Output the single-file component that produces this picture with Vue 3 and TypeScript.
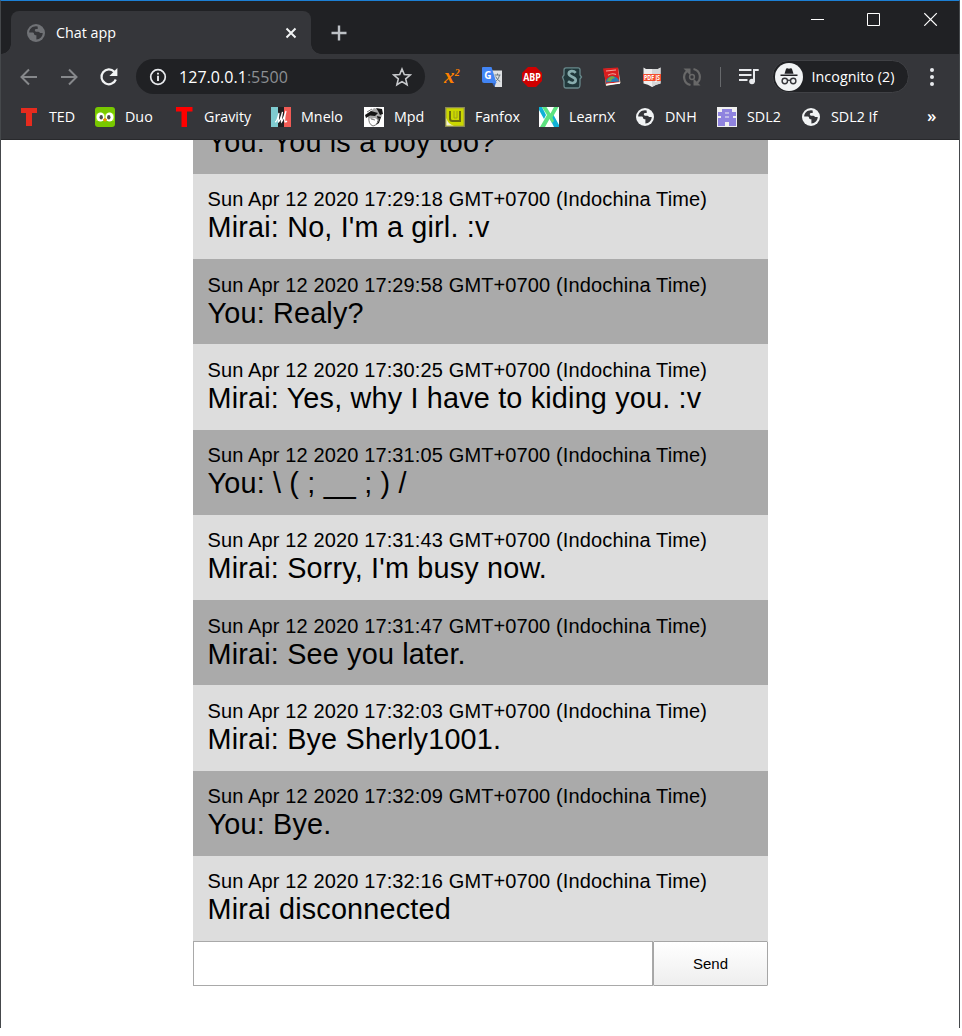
<script setup lang="ts">
interface Message { time?: string; text: string }
const messages: Message[] = [
  { text: 'You: You is a boy too?' },
  { time: '17:29:18', text: "Mirai: No, I'm a girl. :v" },
  { time: '17:29:58', text: 'You: Realy?' },
  { time: '17:30:25', text: 'Mirai: Yes, why I have to kiding you. :v' },
  { time: '17:31:05', text: 'You: \\ ( ; __ ; ) /' },
  { time: '17:31:43', text: "Mirai: Sorry, I'm busy now." },
  { time: '17:31:47', text: 'Mirai: See you later.' },
  { time: '17:32:03', text: 'Mirai: Bye Sherly1001.' },
  { time: '17:32:09', text: 'You: Bye.' },
  { time: '17:32:16', text: 'Mirai disconnected' },
]
const bookmarks: string[] = ['TED', 'Duo', 'Gravity', 'Mnelo', 'Mpd', 'Fanfox', 'LearnX', 'DNH', 'SDL2', 'SDL2 If']
</script>

<template>
  <div class="window">
    <header class="titlebar">
      <div class="tab">
        <svg class="favicon" viewBox="0 0 20 20"><circle cx="10" cy="10" r="9" fill="#707276" /><path d="M10 3.2C6 3.2 3.2 6.2 3.2 9.5h3.2c1.2 0 1.7.7 1.7 1.5s.5 1.2 1.4 1.2h.9v4.4c3.6-.1 6.3-2.9 6.3-6.5h-1.9c-.8 0-1.2-.7-1.8-1.1-.7-.5-1.7-.3-2.4-.3-1.1 0-1.8-.7-1.8-1.5s.8-1.3 1.8-1.3h1.1V3.4z" fill="#35363a" /></svg>
        <span class="tab-title">Chat app</span>
        <svg class="close" viewBox="0 0 12 12"><path d="M1.5 1.5l9 9M10.5 1.5l-9 9" stroke="#f1f3f4" stroke-width="2" /></svg>
      </div>
      <svg class="plus" viewBox="0 0 16 16"><path d="M8 .5v15M.5 8h15" stroke="#bdc1c6" stroke-width="2.4" /></svg>
      <div class="controls">
        <svg viewBox="0 0 14 14"><path d="M1 7.5h13" stroke="#fff" /></svg>
        <svg viewBox="0 0 14 14"><path d="M.5 1.5h12v12H.5z" fill="none" stroke="#fff" /></svg>
        <svg viewBox="0 0 14 14"><path d="M.3 1.200l12.500 12.500M12.800 1.200L.3 13.700" stroke="#fff" stroke-width="1.200" /></svg>
      </div>
    </header>

    <nav class="toolbar">
      <div class="nav-icons">
        <svg viewBox="0 0 20 20"><path d="M18 10H3M10 2.500L2.500 10l7.500 7.500" fill="none" stroke="#86888b" stroke-width="2" /></svg>
        <svg viewBox="0 0 20 20"><path d="M2 10h15M10 2.500l7.500 7.500-7.500 7.500" fill="none" stroke="#86888b" stroke-width="2" /></svg>
        <svg viewBox="0 0 20 20"><path d="M16.800 12.500A7.400 7.400 0 1 1 15.300 4.800" fill="none" stroke="#f1f3f4" stroke-width="2.200" /><path d="M18.400 1v8h-8z" fill="#f1f3f4" /></svg>
      </div>
      <div class="omnibox">
        <svg class="info" viewBox="0 0 18 18"><circle cx="9" cy="9" r="7.300" fill="none" stroke="#e8eaed" stroke-width="1.700" /><path d="M9 7.700V13M9 4.800v1.700" stroke="#e8eaed" stroke-width="1.900" /></svg>
        <span class="url">127.0.0.1<span class="port">:5500</span></span>
        <svg class="star" viewBox="0 0 20 20"><path d="M10 2l2.300 5.500 5.900.5-4.500 3.900 1.400 5.800L10 14.600l-5.100 3.100 1.400-5.800L1.800 8l5.900-.5z" fill="none" stroke="#c8cacd" stroke-width="1.600" /></svg>
      </div>
      <div class="extensions">
        <svg viewBox="0 0 20 20"><text x="2" y="16" font-family="Liberation Serif, serif" font-size="21" font-weight="bold" font-style="italic" fill="#ff8000">x</text><text x="12.800" y="9" font-family="Liberation Serif, serif" font-size="10" font-weight="bold" font-style="italic" fill="#ff8000">2</text></svg>
        <svg viewBox="0 0 20 20"><path d="M8 3.500h12V20h-7z" fill="#dfe1e3" /><path d="M10 15.500h4L12.500 20z" fill="#3367c7" /><path d="M12.500 8h6M15.500 6.500V8M17.500 8c-.5 3-2 5-4 6.500M13.700 9.500c1 2 2.500 4 4.500 5" fill="none" stroke="#667680" /><path d="M1 0h8.500l5 16H2Q0 16 0 14V1q0-1 1-1" fill="#4285f4" /><text x="2.200" y="11.700" font-family="Open Sans, sans-serif" font-size="10" font-weight="bold" fill="#fff">G</text></svg>
        <svg viewBox="0 0 20 20"><path d="M6 0h8l6 6v8l-6 6H6l-6-6V6z" fill="#d00000" /><text x="1.200" y="13.800" textLength="17.600" lengthAdjust="spacingAndGlyphs" font-family="Open Sans, sans-serif" font-size="10.500" font-weight="bold" fill="#fff">ABP</text></svg>
        <svg viewBox="0 0 20 20"><path d="M4 .8h12q2 0 2 2V8l1.500 2-1.500 2v5q0 4-2 4H4q-2 0-2-2v-5L.5 10 2 8V3Q2 .8 4 .8z" fill="#20383b" stroke="#69898c" stroke-width="1.300" /><path d="M13.700 5.800C11.500 3.300 6.800 3.700 6.800 6.800S13.700 9.500 13.700 13.100 8.800 16.800 6 14.300" fill="none" stroke="#88adae" stroke-width="2.700" /></svg>
        <svg viewBox="0 0 20 20"><path d="M2 2l14-1 2.500 15L4 19z" fill="#e6d6bf" /><path d="M1 1.500L16 .5l1.500 14.700L4 17z" fill="#d91d1d" /><path d="M4 15.500c-.5-7 11-9 13.300-1z" fill="#267cb3" /><path d="M5 14c2-5 6-6 8-3l-3 1-1 2.500z" fill="#79a545" /><path d="M4 4l10-1M6 8.200q4-2.500 8-.7" fill="none" stroke="#f4a49b" stroke-width="1.100" /><path d="M4.500 17.500L18 16" stroke="#fff" stroke-width="1.500" /></svg>
        <svg viewBox="0 0 20 20"><path d="M1.500.5L4 2h12l2.500-1.500v16Q14 17 10 20q-4-3-8.500-3.500z" fill="#eee" /><path d="M10 2h6l2.500-1.500v16Q14 17 10 20z" fill="#d5d6d7" /><path d="M1 7h18v7H1z" fill="#f34e2d" /><text x="2" y="12.800" textLength="16" lengthAdjust="spacingAndGlyphs" font-family="Open Sans, sans-serif" font-size="6.500" font-weight="bold" fill="#fff">PDF JS</text></svg>
        <svg viewBox="0 0 20 20" fill="none" stroke="#686868" stroke-width="2.200"><path d="M8.500 18A8 8 0 0 1 5.300 3.800M11.500 2A8 8 0 0 1 14.700 16.200" /><path d="M1.500 1.500H8.500V8.500z" fill="#686868" stroke="none" /><path d="M18.500 18.500H11.500V11.500z" fill="#686868" stroke="none" /><circle cx="10" cy="10" r="2.400" stroke-width="1.500" /></svg>
      </div>
      <span class="divider"></span>
      <svg class="queue" viewBox="0 0 20 18"><path d="M0 2h12.500M0 7h12.500M0 12h8.500" stroke="#e8eaed" stroke-width="2" /><circle cx="13" cy="13.500" r="2.800" fill="#e8eaed" /><path d="M15 14V2h4.700" fill="none" stroke="#e8eaed" stroke-width="2" /></svg>
      <div class="profile">
        <svg viewBox="0 0 28 28"><circle cx="14" cy="14" r="14" fill="#f1f3f4" /><path d="M9.500 10.800L11 6q.4-1 1.300-.7l1.700.5 1.700-.5q.9-.3 1.300.7l1.500 4.800zM5.500 11.500h17v1.400h-17z" fill="#202124" /><circle cx="9.800" cy="18" r="2.700" fill="none" stroke="#35363a" stroke-width="1.400" /><circle cx="18.200" cy="18" r="2.700" fill="none" stroke="#35363a" stroke-width="1.400" /><path d="M12.400 17.700q1.600-1 3.200 0" fill="none" stroke="#35363a" stroke-width="1.300" /></svg>
        <span>Incognito (2)</span>
      </div>
      <svg class="menu" viewBox="0 0 4 18"><circle cx="2" cy="2" r="2" /><circle cx="2" cy="9" r="2" /><circle cx="2" cy="16" r="2" /></svg>
    </nav>

    <div class="bookmarks">
      <span v-for="(name, i) in bookmarks" :key="name" class="bookmark">
        <svg viewBox="0 0 20 20">
          <path v-if="i === 0" d="M2 1h16v5h-5v13H7V6H2z" fill="#e62b1e" />
          <g v-else-if="i === 1"><rect width="20" height="20" rx="3" fill="#78c800" /><path d="M1 7q4-3 9 0 5-3 9 0v7H1z" fill="#a0e719" /><ellipse cx="5.500" cy="10" rx="4" ry="4.500" fill="#fff" /><ellipse cx="14.500" cy="10" rx="4" ry="4.500" fill="#fff" /><ellipse cx="6.200" cy="10.200" rx="1.700" ry="2.300" fill="#4b4b4b" /><ellipse cx="13.800" cy="10.200" rx="1.700" ry="2.300" fill="#4b4b4b" /><path d="M7.800 12.500L10 11l2.200 1.500L10 15z" fill="#f49000" /></g>
          <path v-else-if="i === 2" d="M2 0h16.500v4.500H13V20H7.500V4.500H2z" fill="#f00" />
          <g v-else-if="i === 3"><path d="M0 0h7v20H0z" fill="#7fcbd0" /><path d="M7 0h6v20H7z" fill="#211f20" /><path d="M13 0h7v20h-7z" fill="#f15b55" /><path d="M4 15q2 0 4-9-1 8-.5 9 2-2 4-10-1.500 8-1 10 2-3 4.500-11-2 8-1 11 1 0 2-1" fill="none" stroke="#fff" stroke-width="1.200" /></g>
          <g v-else-if="i === 4"><path d="M0 0h20v20H0z" fill="#fff" /><path d="M10 1l6 2 2 6-3 5-4-3-4 1-4-3 4-5z" fill="#a8a8a8" /><path d="M1 8l6-4 7 2-3 3-5-.5L2 11zM12 1l6 1 1 5-3 1-2-4zM13 9l4 1-2 6-3 2 2-5z" fill="#151515" /><path d="M5 10q-1 7 4 9 5-1 6-8M7 12l4 1M3 5l5-3" fill="none" stroke="#777" /></g>
          <g v-else-if="i === 5"><path d="M.7.700h18.600v18.600H.7z" fill="#cbd700" stroke="#8b8954" stroke-width="1.300" /><path d="M5 4v7.500q0 2.500 2.500 2.500H15V4" fill="none" stroke="#68690d" stroke-width="2" /><path d="M9 4v7h3V4" fill="none" stroke="#9da018" stroke-width="1" /><path d="M1.400 11q1.600 6.600 7.600 7.600H1.400z" fill="#f3f1d9" /></g>
          <g v-else-if="i === 6"><path d="M0 0h20v20H0z" fill="#fff" /><path d="M0 0h3l4 8-2 4L0 3zM11 12l3-5 6 11v2h-5z" fill="#10b1d6" /><path d="M3 0h4.500l4 6.500L15 0h4.500l-6 10.500L15 14l-2 2-2.500-4L6 20H1l7-12z" fill="#5de280" /></g>
          <g v-else-if="i === 7 || i === 9"><circle cx="10" cy="10" r="9" fill="#f1f3f4" /><path d="M10 3.200C6 3.200 3.200 6.200 3.200 9.500h3.200c1.200 0 1.700.7 1.700 1.500s.5 1.200 1.400 1.200h.9v4.400c3.600-.1 6.300-2.900 6.300-6.500h-1.900c-.8 0-1.200-.7-1.800-1.100-.7-.5-1.700-.3-2.400-.3-1.100 0-1.800-.7-1.800-1.500s.8-1.300 1.800-1.300h1.100V3.400z" fill="#35363a" /></g>
          <g v-else><path d="M0 0h20v20H0z" fill="#f0f0f0" /><path d="M5 2h10v3h4v4h-3v2h3v8h-7v-4H8v4H1v-8h3V9H1V5h4z" fill="#8f83df" /><path d="M8 5.500h4v1H8zM8 9.500h4v1H8z" fill="#f0f0f0" /></g>
        </svg>
        <span>{{ name }}</span>
      </span>
      <span class="more">»</span>
    </div>

    <main class="page">
      <section class="chat">
        <div class="messages">
          <article v-for="m in messages" :key="m.text" class="message">
            <div v-if="m.time" class="time">Sun Apr 12 2020 {{ m.time }} GMT+0700 (Indochina Time)</div>
            <div class="text">{{ m.text }}</div>
          </article>
        </div>
        <form class="composer" @submit.prevent>
          <input type="text" aria-label="Message" />
          <button type="submit">Send</button>
        </form>
      </section>
    </main>
  </div>
</template>

<style>
body { background: #fff; }
</style>
<style scoped>
* { box-sizing: border-box; }
svg { display: block; flex: none; }
.window { width: 960px; height: 1028px; border: 1px solid #45484b; border-top-color: #1c7fd4; border-bottom: 0; font: 14.300px/20px "Open Sans", "Noto Sans", sans-serif; color: #fff; display: flex; flex-direction: column; overflow: hidden; white-space: nowrap; }
.titlebar { height: 53px; flex: none; background: #202124; display: flex; padding: 10px 0 0 10px; }
.tab { position: relative; width: 300px; height: 43px; border-radius: 8px 8px 0 0; background: #35363a; display: flex; align-items: center; padding: 0 14px 0 15px; }
.tab::before, .tab::after { content: ""; position: absolute; bottom: 0; width: 10px; height: 10px; }
.tab::before { left: -10px; background: radial-gradient(circle at 0 0, #202124 9.500px, #35363a 10px); }
.tab::after { right: -10px; background: radial-gradient(circle at 100% 0, #202124 9.500px, #35363a 10px); }
.favicon { width: 20px; height: 20px; }
.tab-title { margin-left: 10px; flex: 1; }
.close { width: 12px; height: 12px; }
.plus { width: 16px; height: 16px; margin: 13.500px 0 0 19.500px; }
.controls { margin: 1px 0 0 auto; display: flex; gap: 43px; padding-right: 21px; }
.controls svg { width: 14px; height: 14px; }
.toolbar { height: 45px; flex: none; background: #35363a; display: flex; align-items: center; }
.nav-icons { display: flex; gap: 20px; margin-left: 18px; }
.nav-icons svg { width: 20px; height: 20px; }
.omnibox { width: 289px; height: 35px; margin-left: 17px; border-radius: 18px; background: #202124; display: flex; align-items: center; padding: 0 13px 0 13px; }
.info { width: 18px; height: 18px; }
.url { flex: 1; margin-left: 12px; font-size: 16px; letter-spacing: 0.04px; }
.port { color: #8c8f93; }
.star { width: 20px; height: 20px; }
.extensions { display: flex; gap: 20px; margin-left: 17px; }
.extensions svg { width: 20px; height: 20px; overflow: visible; }
.divider { width: 1px; height: 20px; margin-left: 18px; background: #67696c; }
.queue { width: 20px; height: 18px; margin-left: 18px; }
.profile { width: 137px; height: 33px; margin-left: 13px; border: 1px solid #404145; border-radius: 17px; background: #202124; display: flex; align-items: center; gap: 9px; padding-left: 1.500px; letter-spacing: 0.05px; }
.profile svg { width: 28px; height: 28px; }
.menu { width: 4px; height: 18px; margin-left: 21px; fill: #e8eaed; }
.bookmarks { height: 41px; flex: none; background: #35363a; border-bottom: 1px solid #28292c; display: grid; grid-template-columns: 76px 79px 97px 93px 81px 94px 96px 82px 84px 126px auto; padding: 8px 0 0 18px; align-items: start; }
.bookmark { display: flex; align-items: center; gap: 10px; }
.bookmark svg { width: 20px; height: 20px; }
.more { font-size: 17px; line-height: 17px; font-weight: 600; }
.page { flex: 1; min-height: 0; background: #fff; color: #000; display: flex; justify-content: center; font-family: "Liberation Sans", Arial, sans-serif; }
.chat { width: 575px; height: 846px; display: flex; flex-direction: column; }
.messages { height: 801px; display: flex; flex-direction: column; justify-content: flex-end; overflow: hidden; }
.message { flex: none; height: 85.250px; padding: 0 14px 14.750px 15px; display: flex; flex-direction: column; justify-content: flex-end; background: #ddd; }
.message:nth-child(odd) { background: #aaa; }
.time { font-size: 20px; line-height: 23px; letter-spacing: 0.13px; }
.text { font-size: 28.800px; line-height: 33px; letter-spacing: 0.18px; }
.composer { height: 45px; display: flex; margin: 0; }
.composer input { width: 460px; height: 45px; border: 1px solid #a9a9a9; border-radius: 0; margin: 0; padding: 0 10px; background: #fff; outline: 0; }
.composer button { width: 115px; height: 45px; border: 1px solid #a6a6a6; border-radius: 1px; margin: 0; padding: 0 0 0 1px; background: linear-gradient(#fff, #eee); font: 15px "Liberation Sans", Arial, sans-serif; color: #000; }
</style>
